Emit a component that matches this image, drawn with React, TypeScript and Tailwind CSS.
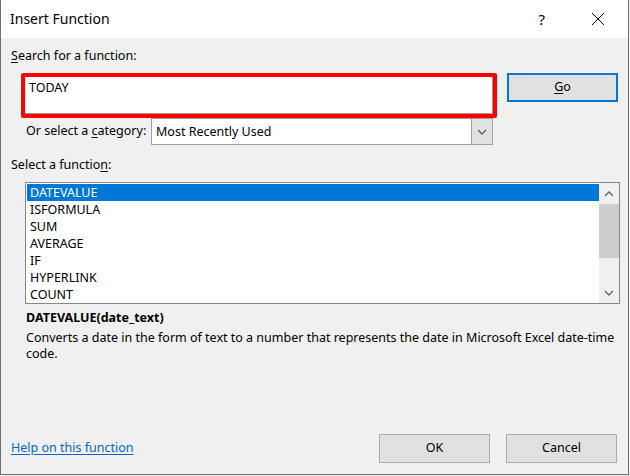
import React from "react";

const functions = [
  "DATEVALUE",
  "ISFORMULA",
  "SUM",
  "AVERAGE",
  "IF",
  "HYPERLINK",
  "COUNT",
];

function Chevron({ up }: { up?: boolean }) {
  return (
    <svg width="10" height="6" viewBox="0 0 10 6" aria-hidden="true">
      <polyline
        points={up ? "1,5 5,1 9,5" : "1,1 5,5 9,1"}
        fill="none"
        stroke="#606060"
        strokeWidth="1.3"
      />
    </svg>
  );
}

export default function App() {
  return (
    <div
      className="h-[476px] w-[630px] overflow-hidden bg-[#f0f0f0] text-[12.5px] text-black"
      style={{ fontFamily: '"Noto Sans", "Open Sans", sans-serif' }}
    >
      <div className="flex h-[475px] w-[629px] flex-col border-x border-b border-[#6f6f6f] bg-[#f0f0f0]">
        {/* title bar */}
        <div className="flex h-[38px] shrink-0 items-center bg-white">
          <span className="pl-[9px] text-[14px] leading-none">
            Insert Function
          </span>
          <span className="ml-auto pr-[46px] text-[15px] leading-none">?</span>
          <svg
            width="14"
            height="14"
            viewBox="0 0 14 14"
            className="mr-[23px]"
            aria-hidden="true"
          >
            <path d="M1 1 L13 13 M13 1 L1 13" stroke="#000" strokeWidth="1" />
          </svg>
        </div>

        {/* body */}
        <div className="flex flex-1 flex-col px-[10px]">
          <div className="mt-[10px] h-[16px] leading-[16px]">
            <span className="underline underline-offset-2">S</span>earch for a
            function:
          </div>

          <div className="mt-[9px] flex items-start">
            <div className="ml-[10px] h-[45px] w-[476px] rounded-[2px] border-4 border-[#ff0000] bg-white">
              <div className="h-full w-full border-r border-b border-[#9a9a9a] pl-[4px] pt-[3px] leading-[16px]">
                TODAY
              </div>
            </div>
            <button
              type="button"
              className="ml-[10px] h-[29px] w-[111px] border-2 border-[#0078d7] bg-[#e1e1e1] leading-none"
            >
              <span className="underline underline-offset-2">G</span>o
            </button>
          </div>

          <div className="flex h-[27px] items-center">
            <span className="ml-[15px] w-[125px] whitespace-nowrap">
              Or select a <span className="underline underline-offset-2">c</span>
              ategory:
            </span>
            <div className="flex h-[27px] w-[342px] border border-[#a0a0a0] bg-white">
              <span className="flex-1 pl-[4px] leading-[25px]">
                Most Recently Used
              </span>
              <span className="flex w-[21px] items-center justify-center border-l border-[#a0a0a0] bg-[#e1e1e1]">
                <Chevron />
              </span>
            </div>
          </div>

          <div className="mt-[12px] h-[16px] leading-[16px]">
            Select a functio
            <span className="underline underline-offset-2">n</span>:
          </div>

          <div className="ml-[14px] mt-[9px] flex h-[122px] w-[595px] border border-[#828790] bg-white">
            <div className="flex-1 pl-[1px] pt-[1px]">
              {functions.map((f, i) => (
                <div
                  key={f}
                  className={
                    i === 0
                      ? "h-[17px] bg-[#0078d7] pl-[3px] leading-[17px] text-white"
                      : "h-[17px] pl-[3px] leading-[17px]"
                  }
                >
                  {f}
                </div>
              ))}
            </div>
            <div className="flex w-[20px] flex-col bg-[#f0f0f0]">
              <div className="flex h-[21px] items-center justify-center">
                <Chevron up />
              </div>
              <div className="h-[54px] bg-[#cdcdcd]" />
              <div className="flex-1" />
              <div className="flex h-[21px] items-center justify-center">
                <Chevron />
              </div>
            </div>
          </div>

          <div className="ml-[15px] mt-[6px] h-[16px] font-bold leading-[16px]">
            DATEVALUE(date_text)
          </div>
          <p className="ml-[15px] mt-[4px] leading-[16px]">
            Converts a date in the form of text to a number that represents the
            date in Microsoft Excel date-time
            <br />
            code.
          </p>

          <div className="mb-[11px] mt-auto flex items-center">
            <a href="#" className="text-[#0066cc] underline underline-offset-2">
              Help on this function
            </a>
            <button
              type="button"
              className="ml-auto h-[29px] w-[111px] border border-[#adadad] bg-[#e1e1e1]"
            >
              OK
            </button>
            <button
              type="button"
              className="ml-[16px] mr-[1px] h-[29px] w-[111px] border border-[#adadad] bg-[#e1e1e1]"
            >
              Cancel
            </button>
          </div>
        </div>
      </div>
    </div>
  );
}
